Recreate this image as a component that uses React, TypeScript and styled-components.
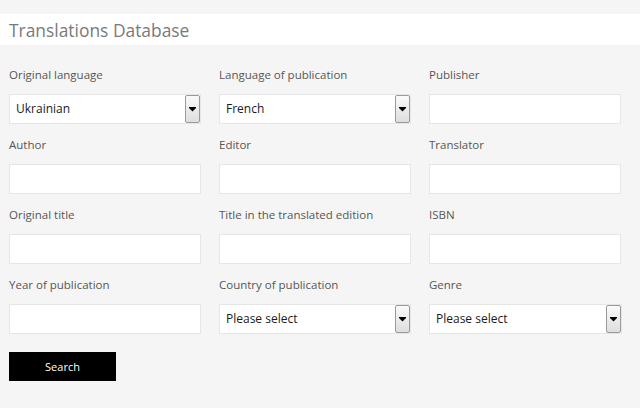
import React from 'react';
import styled, {createGlobalStyle} from 'styled-components';

const GlobalStyle = createGlobalStyle`
  html, body {
    margin: 0;
    padding: 0;
    background: #f5f5f5;
  }
  body {
    font-family: "Open Sans", "Liberation Sans", sans-serif;
  }
`

const Page = styled.div`
  width: 640px;
  height: 408px;
  padding-top: 14px;
  box-sizing: border-box;
  background: #f5f5f5;
  overflow: hidden;
`

const Header = styled.div`
  height: 31px;
  background: #ffffff;
  display: flex;
  align-items: center;
  padding-left: 9px;
`

const Title = styled.h1`
  margin: 0;
  font-size: 17.4px;
  font-weight: 400;
  color: #7a7a7a;
`

const Form = styled.form`
  padding: 20px 0 0 9px;
`

const Grid = styled.div`
  display: grid;
  grid-template-columns: repeat(3, 192px);
  column-gap: 18px;
  row-gap: 11px;
`

const Field = styled.div`
  display: flex;
  flex-direction: column;
`

const Label = styled.label`
  height: 20px;
  line-height: 20px;
  margin-bottom: 9px;
  font-size: 11.5px;
  color: #555555;
  white-space: nowrap;
`

const TextInput = styled.input`
  height: 30px;
  box-sizing: border-box;
  border: 1px solid #e6e6e6;
  background: #ffffff;
  outline: none;
  padding: 0 7px;
  font-family: inherit;
  font-size: 12px;
`

const SelectBox = styled.div<{$wide?: boolean}>`
  height: 30px;
  width: ${p => (p.$wide ? '193px' : '192px')};
  box-sizing: border-box;
  border: 1px solid #e6e6e6;
  background: #ffffff;
  display: flex;
  align-items: stretch;
  padding: 0 0 0 0;
`

const NativeSelect = styled.select`
  flex: 1;
  appearance: none;
  border: none;
  outline: none;
  background: transparent;
  padding: 0 0 1px 6px;
  font-family: inherit;
  font-size: 12px;
  color: #1a1a1a;
`

const ArrowButton = styled.div`
  width: 15px;
  margin: 0 0 0 0;
  box-sizing: border-box;
  border: 1px solid #9a9a9a;
  border-radius: 2px;
  background: linear-gradient(#fafafa, #dedede);
  display: flex;
  align-items: center;
  justify-content: center;
`

const SearchButton = styled.button`
  margin-top: 18px;
  width: 107px;
  height: 29px;
  border: none;
  background: #000000;
  color: #ffffff;
  font-family: inherit;
  font-size: 11px;
  cursor: pointer;
`

const Arrow = () => (
  <svg width="7" height="5" viewBox="0 0 7 5">
    <rect x="0" y="0" width="7" height="1" fill="#000"/>
    <polygon points="0,1 7,1 3.5,4.5" fill="#000"/>
  </svg>
)

type Select = {id: string, value: string, wide?: boolean}

const Dropdown: React.FC<Select> = ({id, value, wide}) => (
  <SelectBox $wide={wide}>
    <NativeSelect id={id} defaultValue={value}>
      <option>{value}</option>
    </NativeSelect>
    <ArrowButton><Arrow/></ArrowButton>
  </SelectBox>
)

type FieldDef = {label: string, id: string, select?: string, wide?: boolean}

const fields: FieldDef[] = [
  {label: 'Original language', id: 'orig-lang', select: 'Ukrainian'},
  {label: 'Language of publication', id: 'pub-lang', select: 'French'},
  {label: 'Publisher', id: 'publisher'},
  {label: 'Author', id: 'author'},
  {label: 'Editor', id: 'editor'},
  {label: 'Translator', id: 'translator'},
  {label: 'Original title', id: 'orig-title'},
  {label: 'Title in the translated edition', id: 'trans-title'},
  {label: 'ISBN', id: 'isbn'},
  {label: 'Year of publication', id: 'year'},
  {label: 'Country of publication', id: 'country', select: 'Please select'},
  {label: 'Genre', id: 'genre', select: 'Please select', wide: true},
]

const App: React.FC = () => {
  return (
    <>
      <GlobalStyle/>
      <Page>
        <Header>
          <Title>Translations Database</Title>
        </Header>
        <Form onSubmit={e => e.preventDefault()}>
          <Grid>
            {fields.map(f => (
              <Field key={f.id}>
                <Label htmlFor={f.id}>{f.label}</Label>
                {f.select
                  ? <Dropdown id={f.id} value={f.select} wide={f.wide}/>
                  : <TextInput id={f.id} type="text"/>}
              </Field>
            ))}
          </Grid>
          <SearchButton type="submit">Search</SearchButton>
        </Form>
      </Page>
    </>
  )
}

export default App
